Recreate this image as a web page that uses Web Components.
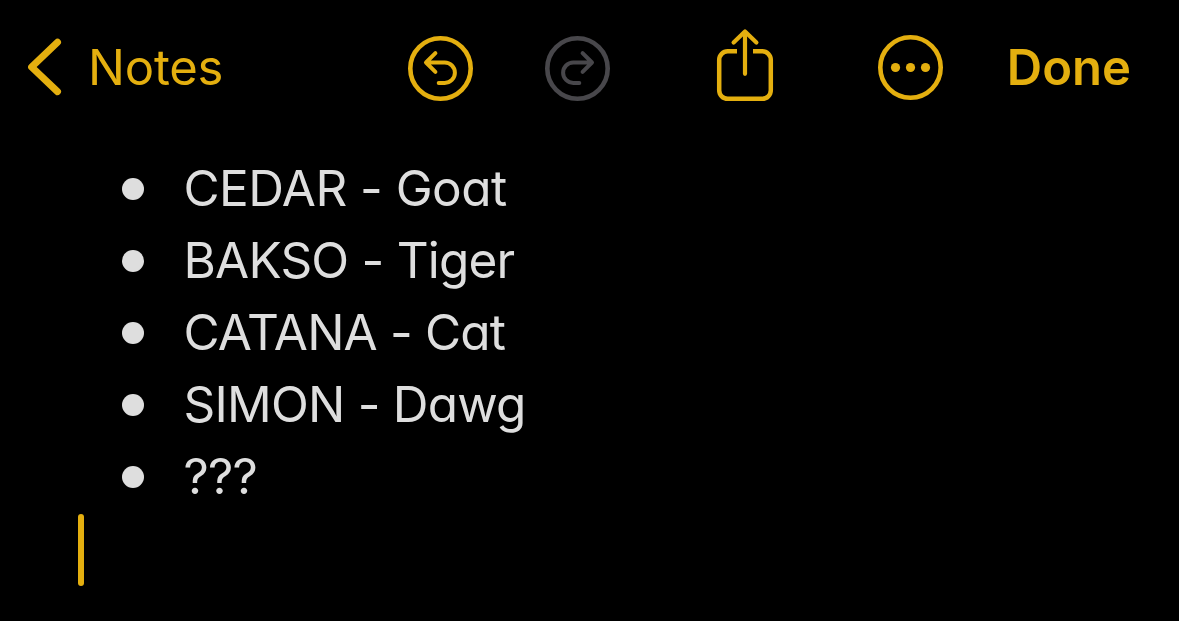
<!DOCTYPE html>
<html lang="en">
<head>
<meta charset="utf-8">
<title>Notes</title>
<style>
  body {
    margin: 0;
    background: #000;
    font-family: Inter, "Liberation Sans", sans-serif;
    --accent: #e4af0f;
    --disabled: #48474b;
    --text: #dedede;
  }
</style>
</head>
<body>
<notes-app>
  <nav-bar slot="header">
    <nav-back slot="back">Notes</nav-back>
    <tool-icon name="undo"></tool-icon>
    <tool-icon name="redo" disabled></tool-icon>
    <tool-icon name="share"></tool-icon>
    <tool-icon name="more"></tool-icon>
    <nav-done slot="done">Done</nav-done>
  </nav-bar>
  <note-item tracking="-0.55">CEDAR - Goat</note-item>
  <note-item tracking="-0.8">BAKSO - Tiger</note-item>
  <note-item tracking="-0.85">CATANA - Cat</note-item>
  <note-item tracking="-0.78">SIMON - Dawg</note-item>
  <note-item tracking="-0.8">???</note-item>
  <note-caret></note-caret>
</notes-app>

<script>
const icons = {
  undo: {
    width: 66,
    margin: 71,
    x: -0.5,
    body: `<circle cx="33" cy="32.5" r="30.2" stroke-width="4.6"/>
      <path d="M27.9 17.2 18.5 26.5 27.9 35.8M19 26.5H37.2a10.2 10.2 0 0 1 0 20.4H31.2" stroke-width="4"/>`
  },
  redo: {
    width: 66,
    margin: 106,
    x: -0.5,
    body: `<circle cx="33" cy="32.5" r="30.2" stroke-width="4.6"/>
      <path d="M38.1 17.2 47.5 26.5 38.1 35.8M47 26.5H28.8a10.2 10.2 0 0 0 0 20.4H34.8" stroke-width="4"/>`
  },
  share: {
    width: 58,
    margin: 103,
    x: 0,
    body: `<path d="M21 15.3H11.7a8.5 8.5 0 0 0-8.5 8.5V54.3a8.5 8.5 0 0 0 8.5 8.5H46.3a8.5 8.5 0 0 0 8.5-8.5V23.8a8.5 8.5 0 0 0-8.5-8.5H37" stroke-width="4.5" stroke-linecap="butt"/>
      <path d="M29-3.8V37.8M17.6 6.6 29-4.6 40.4 6.6" stroke-width="4.2"/>`
  },
  more: {
    width: 66,
    margin: 0,
    x: -0.5,
    body: `<circle cx="33" cy="31.5" r="30.2" stroke-width="4.6"/>
      <g fill="currentColor" stroke="none">
        <circle cx="18" cy="31.5" r="4.6"/><circle cx="33" cy="31.5" r="4.6"/><circle cx="48" cy="31.5" r="4.6"/>
      </g>`
  }
};

class NotesApp extends HTMLElement {
  constructor() {
    super();
    this.attachShadow({ mode: "open" });
    this.shadowRoot.innerHTML = `
      <style>
        :host {
          display: block;
          width: 1179px;
          height: 621px;
          overflow: hidden;
          background: #000;
        }
        main {
          padding: 16px 78px 0;
        }
      </style>
      <slot name="header"></slot>
      <main><slot></slot></main>
    `;
  }
}
customElements.define("notes-app", NotesApp);

class NavBar extends HTMLElement {
  constructor() {
    super();
    this.attachShadow({ mode: "open" });
    this.shadowRoot.innerHTML = `
      <style>
        :host {
          display: flex;
          align-items: center;
          box-sizing: border-box;
          height: 136px;
          padding: 0 48px 0 26px;
          color: var(--accent);
        }
        .back {
          width: 381px;
        }
        .tools {
          display: flex;
          flex: 1;
        }
      </style>
      <div class="back"><slot name="back"></slot></div>
      <div class="tools"><slot></slot></div>
      <slot name="done"></slot>
    `;
  }
}
customElements.define("nav-bar", NavBar);

class NavBack extends HTMLElement {
  constructor() {
    super();
    this.attachShadow({ mode: "open" });
    this.shadowRoot.innerHTML = `
      <style>
        :host {
          display: flex;
          align-items: center;
          gap: 26px;
          font-size: 49px;
          line-height: 64px;
          letter-spacing: -0.2px;
        }
        svg {
          display: block;
        }
      </style>
      <svg width="36" height="64" viewBox="0 0 36 64" fill="none" stroke="currentColor" stroke-width="7" stroke-linecap="round" stroke-linejoin="round">
        <path d="M31.5 6.2 5.6 31 31.5 55.6"/>
      </svg>
      <slot></slot>
    `;
  }
}
customElements.define("nav-back", NavBack);

class NavDone extends HTMLElement {
  constructor() {
    super();
    this.attachShadow({ mode: "open" });
    this.shadowRoot.innerHTML = `
      <style>
        :host {
          display: block;
          font-size: 49px;
          font-weight: 600;
          line-height: 64px;
        }
      </style>
      <slot></slot>
    `;
  }
}
customElements.define("nav-done", NavDone);

class ToolIcon extends HTMLElement {
  constructor() {
    super();
    this.attachShadow({ mode: "open" });
  }
  connectedCallback() {
    const icon = icons[this.getAttribute("name")];
    this.shadowRoot.innerHTML = `
      <style>
        :host {
          display: block;
          flex: none;
          margin-right: ${icon.margin}px;
        }
        :host([disabled]) {
          color: var(--disabled);
        }
        svg {
          display: block;
          overflow: visible;
        }
      </style>
      <svg width="${icon.width}" height="64" viewBox="${icon.x} 0 ${icon.width} 64" fill="none" stroke="currentColor" stroke-linecap="round" stroke-linejoin="round">
        ${icon.body}
      </svg>
    `;
  }
}
customElements.define("tool-icon", ToolIcon);

class NoteItem extends HTMLElement {
  constructor() {
    super();
    this.attachShadow({ mode: "open" });
  }
  connectedCallback() {
    // cv11 is the single-storey "a", calt would lift the dash next to capitals
    this.shadowRoot.innerHTML = `
      <style>
        :host {
          display: flex;
          align-items: center;
          gap: 39.5px;
          height: 72px;
          padding-left: 44px;
          color: var(--text);
          font-size: 49.5px;
          line-height: 72px;
          letter-spacing: ${this.getAttribute("tracking")}px;
          white-space: nowrap;
          font-feature-settings: "cv11", "calt" 0;
        }
        i {
          width: 22px;
          height: 22px;
          margin-top: 1px;
          border-radius: 50%;
          background: currentColor;
        }
      </style>
      <i></i>
      <span><slot></slot></span>
    `;
  }
}
customElements.define("note-item", NoteItem);

class NoteCaret extends HTMLElement {
  constructor() {
    super();
    this.attachShadow({ mode: "open" });
    this.shadowRoot.innerHTML = `
      <style>
        :host {
          display: block;
          width: 6px;
          height: 72px;
          margin-top: 2px;
          border-radius: 3px;
          background: var(--accent);
        }
      </style>
    `;
  }
}
customElements.define("note-caret", NoteCaret);
</script>
</body>
</html>
